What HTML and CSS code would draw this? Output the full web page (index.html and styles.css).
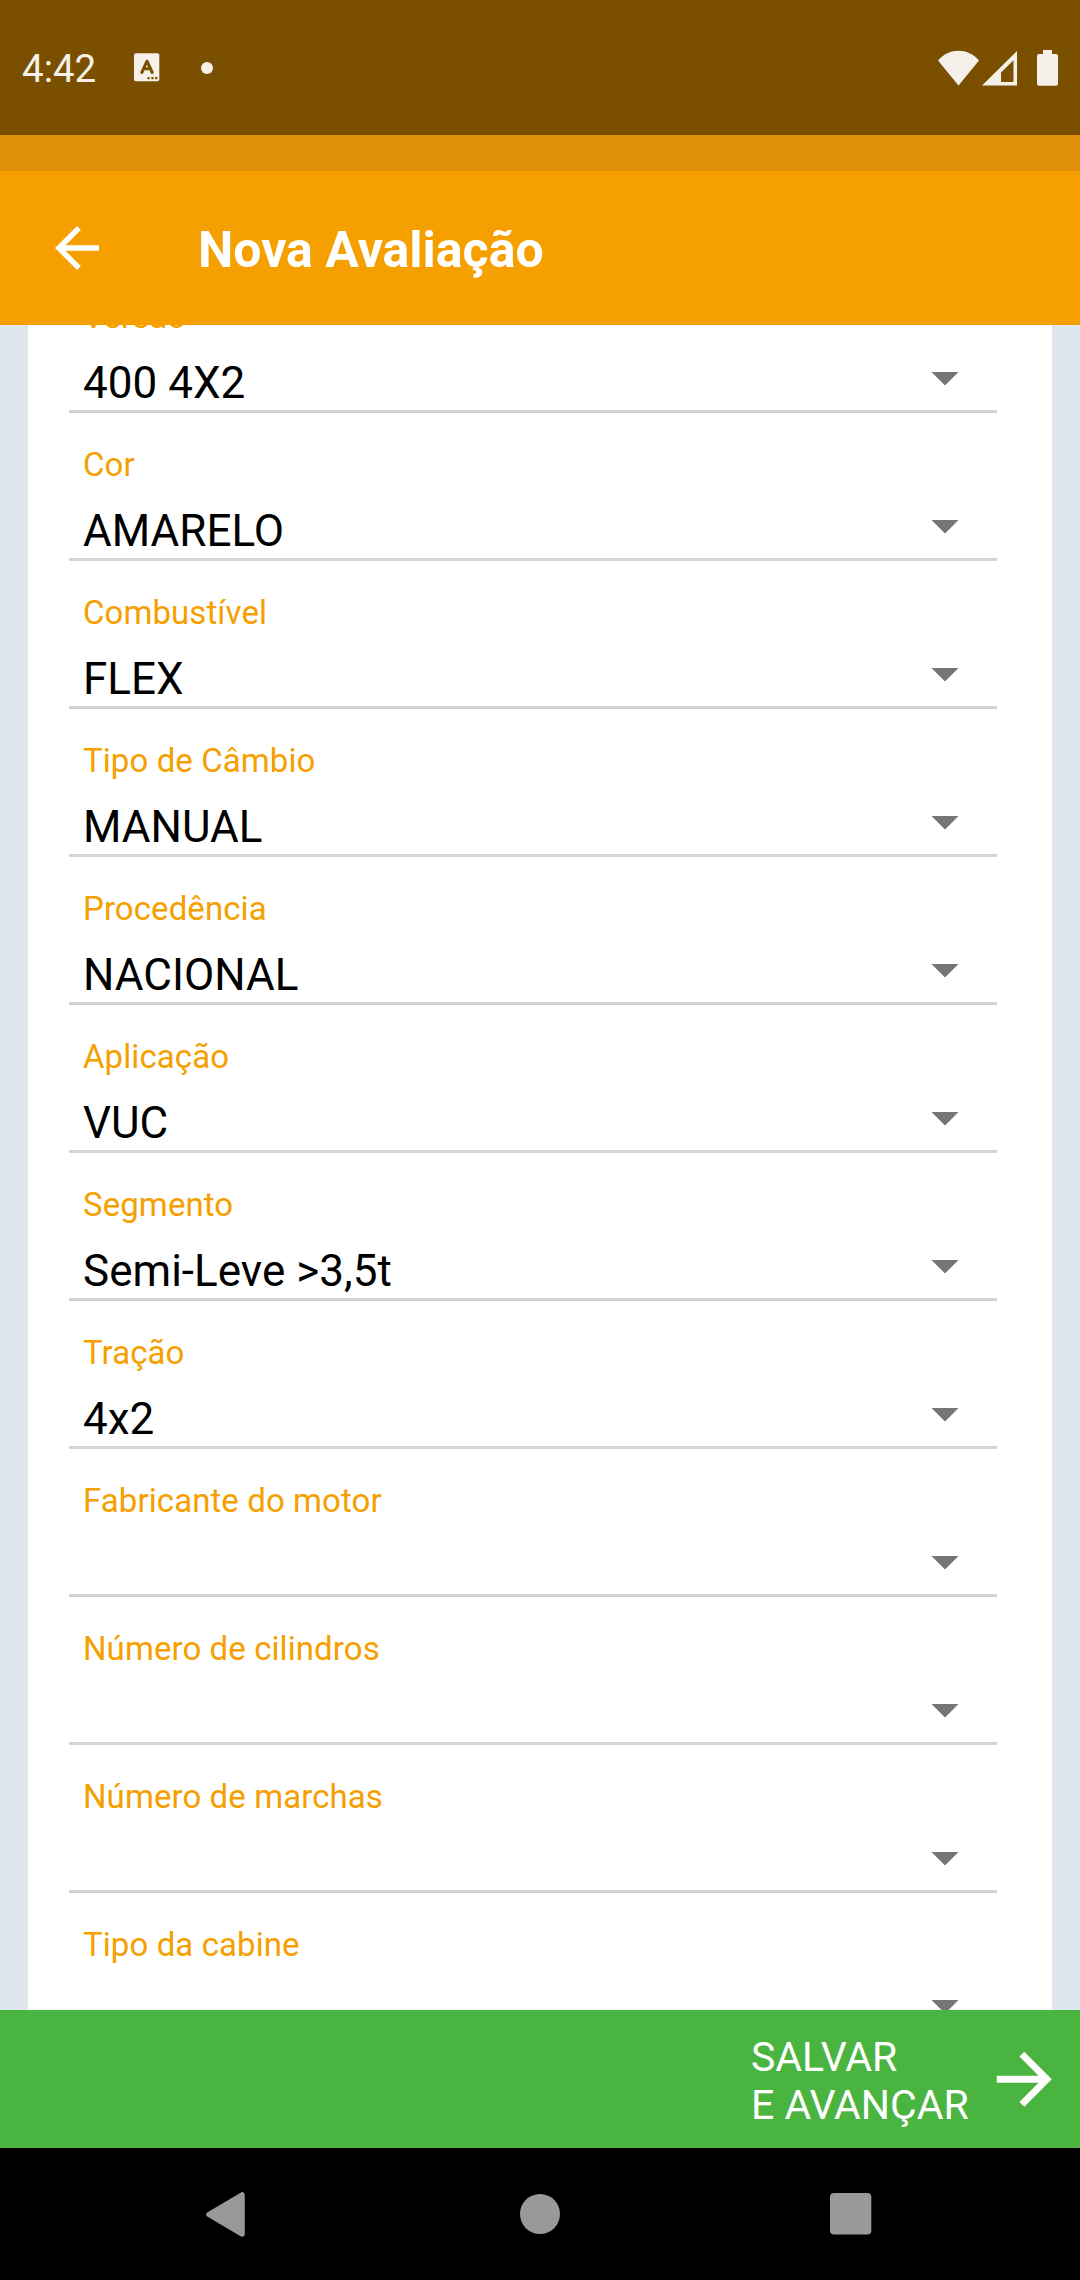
FILE: index.html
```html
<!DOCTYPE html>
<html lang="pt-BR">
<head>
<meta charset="utf-8">
<title>Nova Avaliação</title>
<link rel="stylesheet" href="styles.css">
</head>
<body>
<div class="screen">
  <div class="status-bar">
    <span class="clock">4:42</span>
    <svg class="keyboard-icon" width="26" height="29" viewBox="0 0 26 29"><rect x="0" y="0.3" width="25.3" height="28" rx="2" fill="#f5f1ea"/><path d="M7.8 19.5 13 8.200 18.200 19.500M9.500 15.700h7" fill="none" stroke="#7b4f00" stroke-width="3" stroke-linecap="round" stroke-linejoin="round"/><path d="M13.500 24h2.200v2.200h-2.200zM17.400 24h2.200v2.200h-2.200zM21.200 24h2.200v2.200h-2.200z" fill="#7b4f00"/></svg>
    <span class="dot"></span>
    <div class="status-icons">
      <svg width="41" height="36" viewBox="0 0 41 36"><path d="M0 10.500C11-2.500 30-2.500 41 10.500L20.500 35.500z" fill="#f5f1ea"/></svg>
      <svg class="signal-icon" width="35" height="36" viewBox="0 0 35 36"><path fill-rule="evenodd" d="M35 1v34.500H0zM31.500 10.300 19 22.500v9.500h12.500z" fill="#f5f1ea"/></svg>
      <svg class="battery-icon" width="21" height="36" viewBox="0 0 21 36"><path d="M6 0h9v4h4a2 2 0 0 1 2 2v27.700a2 2 0 0 1-2 2H2a2 2 0 0 1-2-2V6a2 2 0 0 1 2-2h4z" fill="#f5f1ea"/></svg>
    </div>
  </div>
  <div class="strip"></div>
  <header class="app-bar">
    <svg width="66" height="66" viewBox="0 0 24 24"><path d="M20 11H7.830l5.590-5.590L12 4l-8 8 8 8 1.410-1.410L7.830 13H20z" fill="#fff"/></svg>
    <h1 class="title">Nova Avaliação</h1>
  </header>
  <main class="content">
    <div class="card">
      <div class="field"><span class="label">Versão</span><span class="value">400 4X2</span><span class="caret"></span></div>
      <div class="field"><span class="label">Cor</span><span class="value">AMARELO</span><span class="caret"></span></div>
      <div class="field"><span class="label">Combustível</span><span class="value">FLEX</span><span class="caret"></span></div>
      <div class="field"><span class="label">Tipo de Câmbio</span><span class="value">MANUAL</span><span class="caret"></span></div>
      <div class="field"><span class="label">Procedência</span><span class="value">NACIONAL</span><span class="caret"></span></div>
      <div class="field"><span class="label">Aplicação</span><span class="value">VUC</span><span class="caret"></span></div>
      <div class="field"><span class="label">Segmento</span><span class="value">Semi-Leve &gt;3,5t</span><span class="caret"></span></div>
      <div class="field"><span class="label">Tração</span><span class="value">4x2</span><span class="caret"></span></div>
      <div class="field"><span class="label">Fabricante do motor</span><span class="value"></span><span class="caret"></span></div>
      <div class="field"><span class="label">Número de cilindros</span><span class="value"></span><span class="caret"></span></div>
      <div class="field"><span class="label">Número de marchas</span><span class="value"></span><span class="caret"></span></div>
      <div class="field"><span class="label">Tipo da cabine</span><span class="value"></span><span class="caret"></span></div>
    </div>
  </main>
  <div class="save-bar">
    <span class="save-text">SALVAR<br>E AVANÇAR</span>
    <svg width="82.500" height="82.500" viewBox="0 0 24 24"><path d="M12 4l-1.410 1.410L16.170 11H4v2h12.170l-5.580 5.590L12 20l8-8z" fill="#fff"/></svg>
  </div>
  <nav class="nav-bar">
    <svg width="39" height="45" viewBox="0 0 39 45"><path d="M3 22.500 36 3v39z" fill="#999" stroke="#999" stroke-width="5.500" stroke-linejoin="round"/></svg>
    <svg class="home-icon" width="42" height="42" viewBox="0 0 42 42"><circle cx="21" cy="21" r="20" fill="#999"/></svg>
    <svg width="42" height="42" viewBox="0 0 42 42"><rect width="41.300" height="41.500" rx="4" fill="#999"/></svg>
  </nav>
</div>
</body>
</html>
```
FILE: styles.css
```css
* { box-sizing: border-box; }
body { margin: 0; font-family: Roboto, "Noto Sans", sans-serif; }
svg { display: block; flex: none; }
.screen { width: 1080px; height: 2280px; display: flex; flex-direction: column; overflow: hidden; }
.status-bar { height: 135px; flex: none; background: #7b4f00; display: flex; align-items: center; padding: 0 22px; }
.clock { width: 112px; font-size: 38.500px; line-height: 46px; padding-top: 3px; color: #f5f1ea; }
.keyboard-icon { margin-right: 41px; }
.dot { width: 12px; height: 12px; border-radius: 50%; background: #f5f1ea; }
.status-icons { margin-left: auto; display: flex; }
.signal-icon { margin-left: 3px; }
.battery-icon { margin-left: 20px; }
.strip { height: 36px; flex: none; background: #df9008; }
.app-bar { height: 154px; flex: none; background: #f5a000; display: flex; align-items: center; padding-left: 44px; }
.title { margin: 0 0 0 88px; padding-top: 4px; font-size: 50px; font-weight: 700; line-height: 58px; color: #fff; }
.content { flex: 1; min-height: 0; overflow: hidden; background: #dfe6ee; padding: 0 28px; }
.card { margin-top: -60px; background: #fff; padding: 0 55px 0 41px; }
.field { height: 148px; padding: 32px 38px 0 14px; border-bottom: 3px solid #d4d4d4; display: grid; grid-template-columns: 1fr auto; grid-template-rows: 40px 52px; row-gap: 20px; }
.label { grid-column: 1 / 3; font-size: 33px; line-height: 40px; letter-spacing: 0.080px; color: #f5a000; }
.value { font-size: 44px; line-height: 52px; letter-spacing: 0.030px; color: #000; }
.caret { width: 28px; height: 14px; margin-top: 14.500px; background: #757575; clip-path: polygon(0 0, 100% 0, 50% 100%); }
.save-bar { height: 138px; flex: none; background: #49b43f; display: flex; align-items: center; justify-content: flex-end; padding-right: 14.500px; }
.save-text { width: 232px; font-size: 41px; line-height: 48px; padding-top: 4px; color: #fff; white-space: nowrap; }
.nav-bar { height: 132px; flex: none; background: #000; display: flex; align-items: center; justify-content: space-between; padding: 0 208px 0 206px; }
.home-icon { margin-left: 5px; }
```
